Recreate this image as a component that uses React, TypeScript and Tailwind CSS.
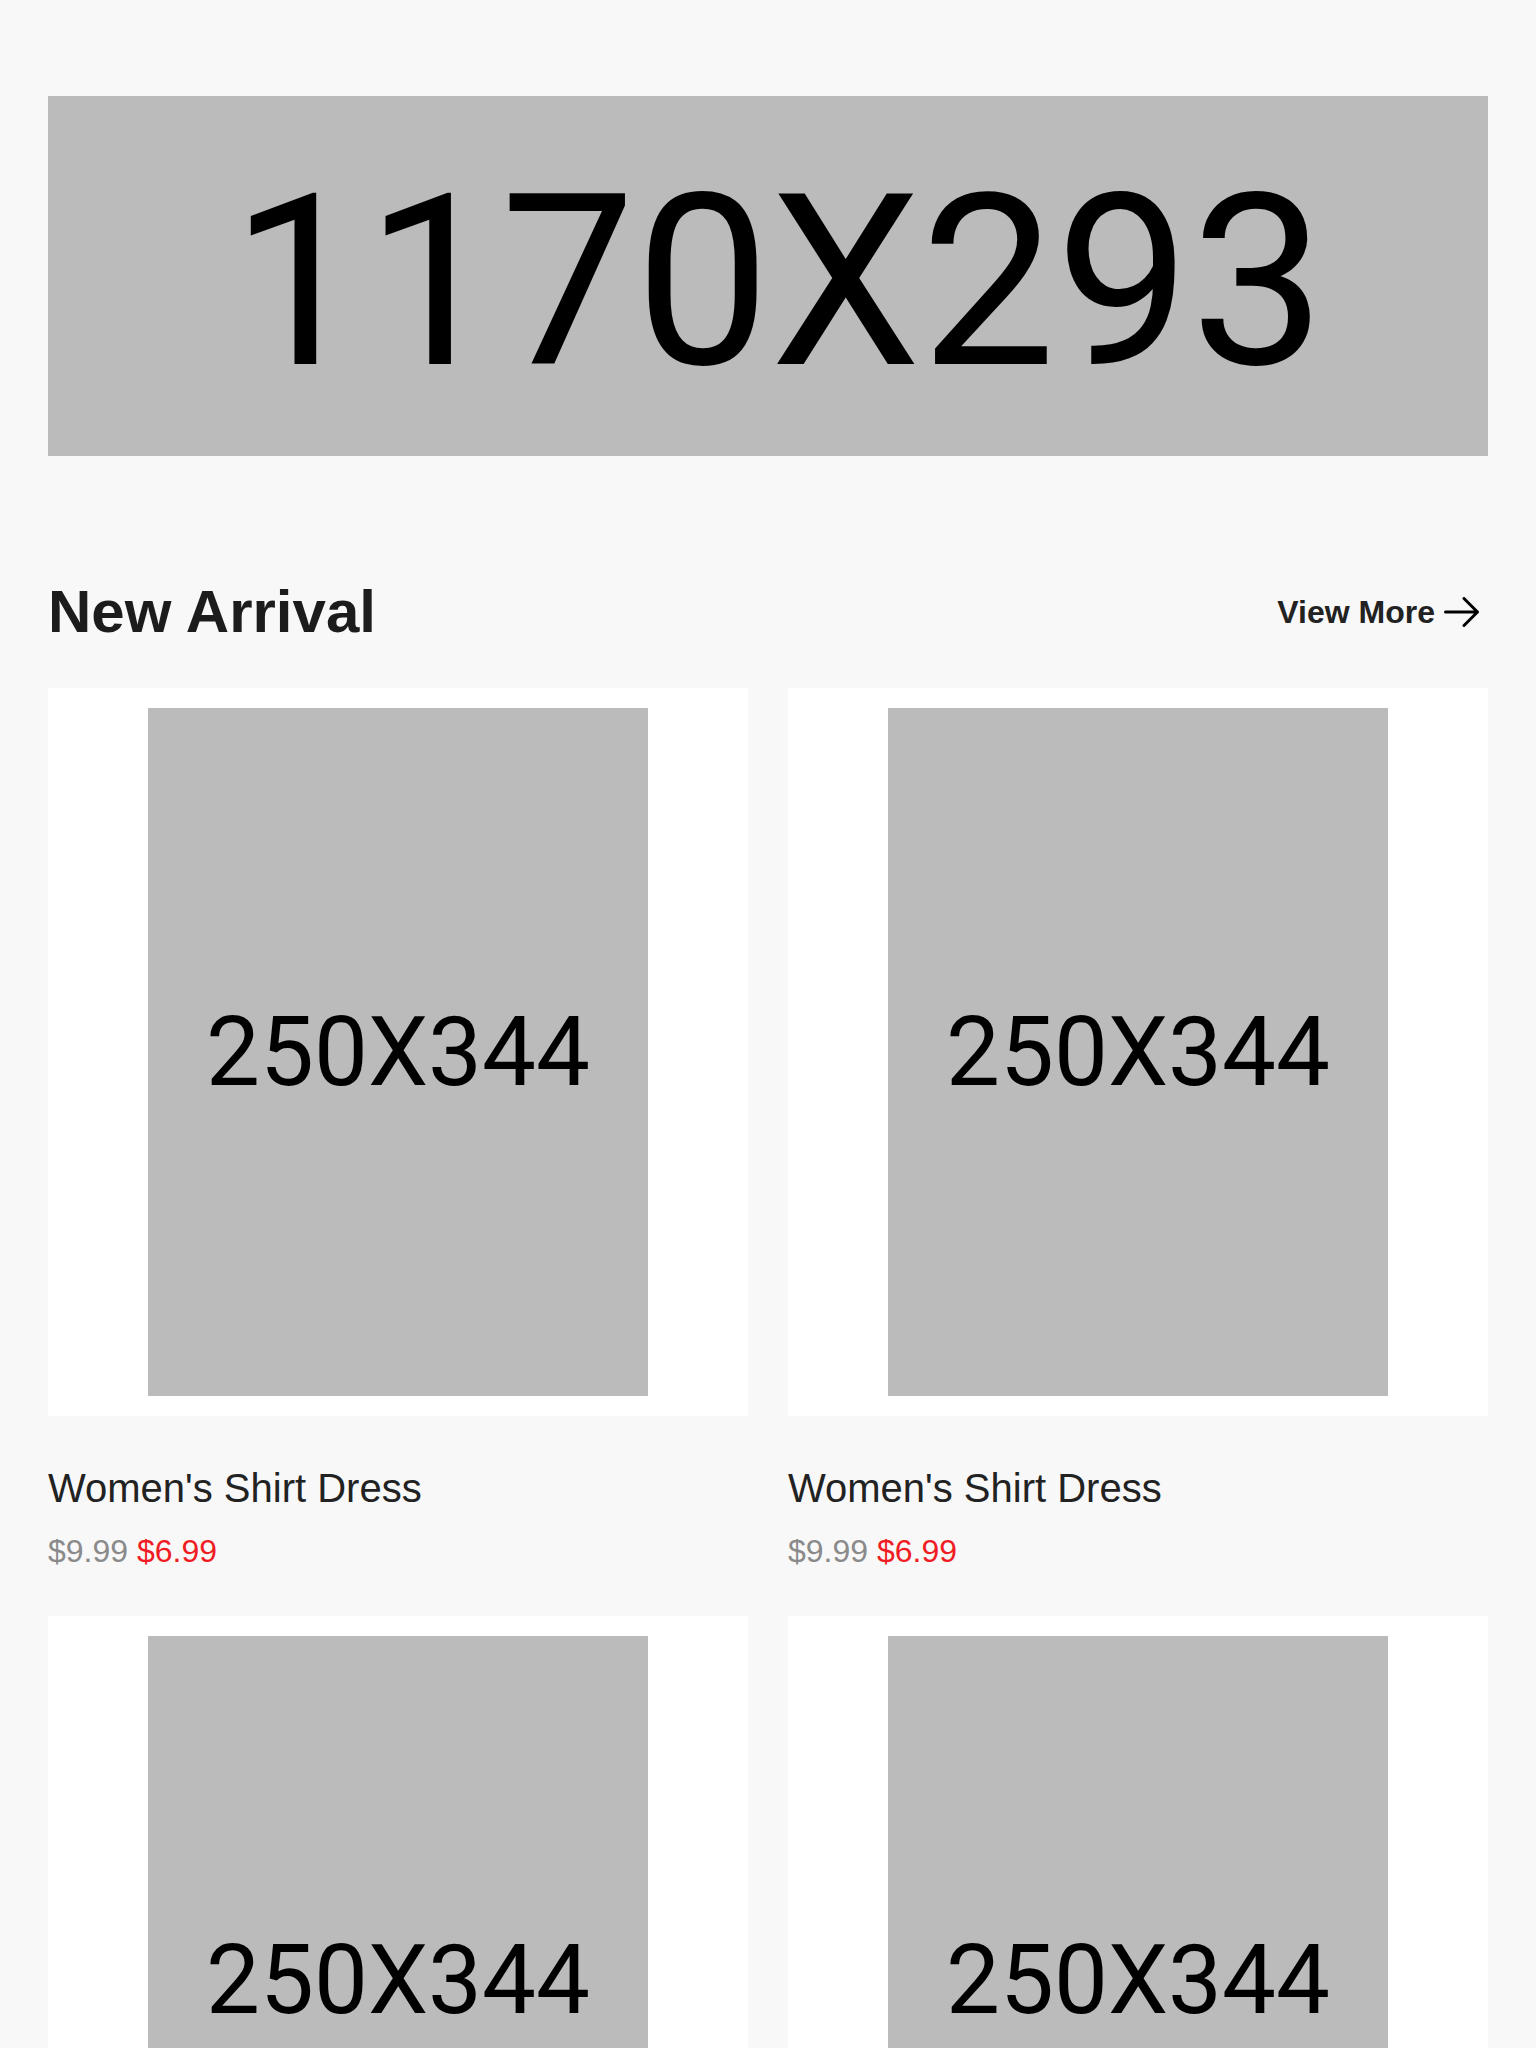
const products = [
  { id: 1, name: "Women's Shirt Dress", oldPrice: '$9.99', price: '$6.99' },
  { id: 2, name: "Women's Shirt Dress", oldPrice: '$9.99', price: '$6.99' },
  { id: 3, name: "Women's Shirt Dress", oldPrice: '$9.99', price: '$6.99' },
  { id: 4, name: "Women's Shirt Dress", oldPrice: '$9.99', price: '$6.99' }
]

const ArrowIcon = () => (
  <svg width="36" height="30" viewBox="0 0 36 30" fill="none" stroke="#000" strokeWidth="3" strokeLinecap="round" strokeLinejoin="round">
    <path d="M1.5 15H33.5M20 1.5L33.5 15L20 28.5" />
  </svg>
)

const ProductCard = ({ name, oldPrice, price }: { name: string; oldPrice: string; price: string }) => {
  return (
    <div className="pb-[49px]">
      <div className="flex justify-center bg-white py-5">
        <div className="flex h-[688px] w-[500px] items-center justify-center bg-[#bbbbbb]">
          <span className="font-['Roboto',sans-serif] text-[96px] leading-none text-black">250X344</span>
        </div>
      </div>
      <h3 className="mt-[52px] text-[40px] leading-none font-normal text-[#222222]">{name}</h3>
      <div className="mt-[27px] text-[32px] leading-none">
        <span className="text-[#8a8a8a]">{oldPrice}</span>{' '}
        <span className="text-[#f01c24]">{price}</span>
      </div>
    </div>
  )
}

const App = () => {
  return (
    <div className="min-h-screen bg-[#f8f8f8] px-12 pt-24 font-['Liberation_Sans',Arial,sans-serif]">
      <div className="flex h-[360px] w-full items-center justify-center bg-[#bbbbbb] pt-3 pl-5">
        <span className="font-['Roboto',sans-serif] text-[240px] leading-none text-black">1170X293</span>
      </div>

      <div className="mt-[126px] flex items-center justify-between">
        <h2 className="text-[60px] leading-[60px] font-bold text-[#1c1c1c]">New Arrival</h2>
        <a href="#" className="mr-2 flex items-center gap-[9px] text-[32px] leading-[32px] font-bold text-[#222222]">
          View More
          <ArrowIcon />
        </a>
      </div>

      <div className="mt-[46px] grid grid-cols-2 gap-x-10">
        {products.map((item) => (
          <ProductCard key={item.id} name={item.name} oldPrice={item.oldPrice} price={item.price} />
        ))}
      </div>
    </div>
  )
}

export default App
